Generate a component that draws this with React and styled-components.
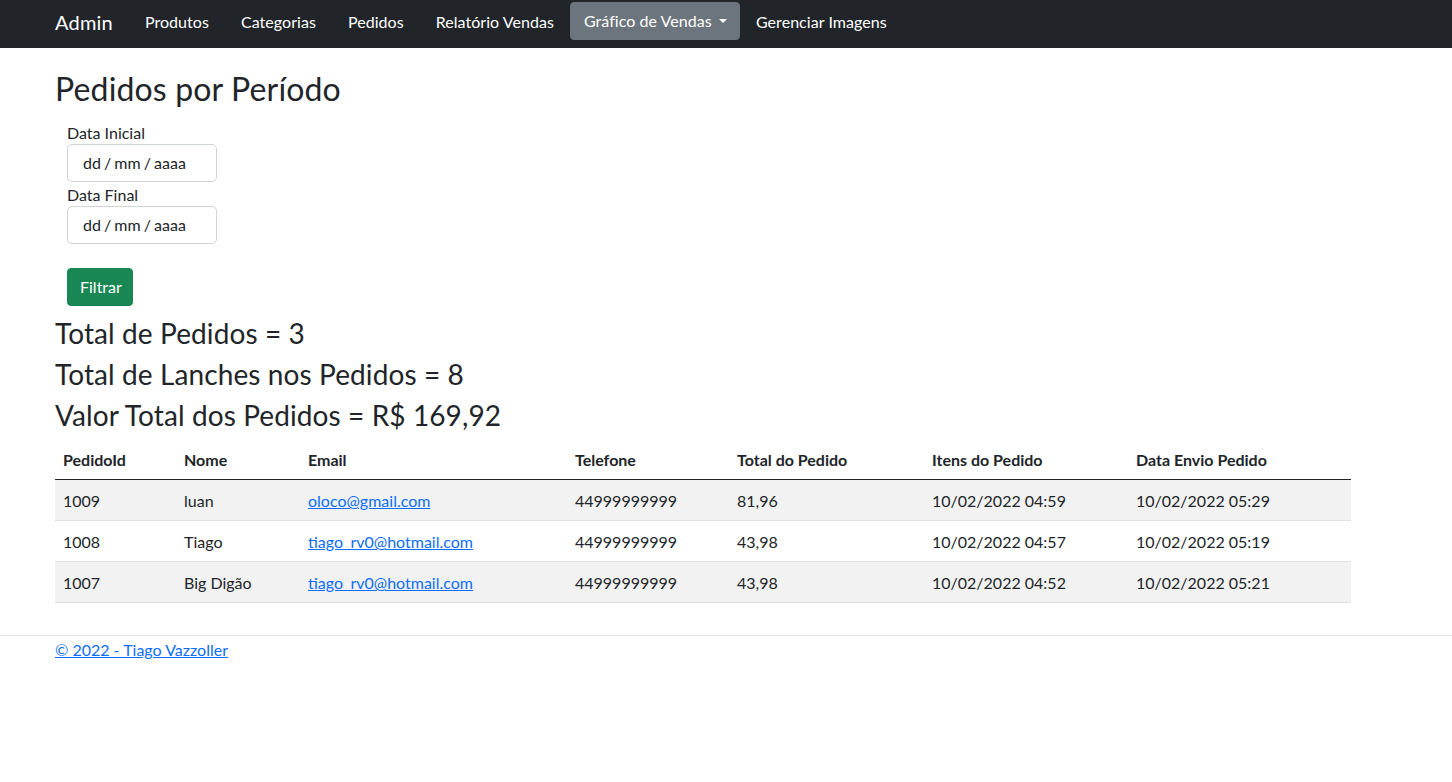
import React from "react";
import styled, { createGlobalStyle } from "styled-components";

const GlobalStyle = createGlobalStyle`
  body {
    margin: 0;
    font-family: "Segoe UI", Lato, "Liberation Sans", sans-serif;
    font-size: 16px;
    line-height: 1.5;
    color: #212529;
    background: #ffffff;
  }
  * {
    box-sizing: border-box;
  }
`;

const NavBar = styled.nav`
  background-color: #212529;
  height: 48px;
`;

const NavInner = styled.div`
  width: 1296px;
  margin-left: 55px;
  height: 100%;
  display: flex;
  align-items: flex-start;
  padding-top: 2px;
  letter-spacing: 0.05px;
`;

const Brand = styled.a`
  color: #ffffff;
  font-size: 20px;
  line-height: 40px;
  margin-right: 16px;
  text-decoration: none;
  letter-spacing: 0.2px;
`;

const NavLink = styled.a`
  color: #ffffff;
  padding: 8px 16px;
  line-height: 24px;
  text-decoration: none;
  white-space: nowrap;
`;

const DropButton = styled.button`
  font-family: inherit;
  font-size: 16px;
  line-height: 24px;
  letter-spacing: 0.05px;
  color: #ffffff;
  background-color: #6c757d;
  border: 1px solid #6c757d;
  border-radius: 4px;
  padding: 6px 12px 6px 13px;
  white-space: nowrap;

  &::after {
    content: "";
    display: inline-block;
    margin-left: 0.45em;
    vertical-align: 0.255em;
    border-top: 0.3em solid;
    border-right: 0.3em solid transparent;
    border-left: 0.3em solid transparent;
    border-bottom: 0;
  }
`;

const Main = styled.main`
  width: 1296px;
  margin-left: 55px;
  padding-top: 22px;
  padding-bottom: 32px;
`;

const Title = styled.h2`
  font-size: 32px;
  font-weight: 400;
  line-height: 38px;
  letter-spacing: 0.15px;
  margin: 0 0 12px;
`;

const Form = styled.form`
  padding-left: 12px;
  display: flex;
  flex-direction: column;
  align-items: flex-start;
`;

const Label = styled.label`
  display: block;
  line-height: 24px;
  padding-top: 1px;
  margin-bottom: -1px;
`;

const DateBox = styled.div`
  width: 150px;
  height: 38px;
  border: 1px solid #ced4da;
  border-radius: 5px;
  padding: 0 15px;
  display: flex;
  align-items: center;
  font-size: 16px;
  word-spacing: -1px;
  color: #212529;
`;

const FilterButton = styled.button`
  margin-top: 24px;
  font-family: inherit;
  font-size: 16px;
  line-height: 24px;
  color: #ffffff;
  background-color: #198754;
  border: 1px solid #198754;
  border-radius: 4px;
  padding: 6px 12px;
  width: 66px;
`;

const Total = styled.h3`
  font-size: 28px;
  font-weight: 400;
  line-height: 34px;
  letter-spacing: 0.1px;
  margin: 0 0 7px;

  &:first-of-type {
    margin-top: 10px;
  }
`;

const Table = styled.table`
  width: 1296px;
  border-collapse: collapse;
  table-layout: fixed;
  margin-top: 8px;
`;

const Th = styled.th`
  text-align: left;
  font-weight: 700;
  padding: 8px;
  line-height: 23px;
  border-bottom: 1px solid #212529;
  width: ${props => props.w}px;
`;

const Row = styled.tr`
  background-color: ${props => (props.striped ? "#f2f2f2" : "#ffffff")};
`;

const Td = styled.td`
  padding: 9px 8px 7px;
  line-height: 24px;
  border-bottom: 1px solid #dee2e6;
  white-space: nowrap;
`;

const MailLink = styled.a`
  color: #0d6efd;
  text-decoration: underline;
`;

const Footer = styled.footer`
  border-top: 1px solid #dee2e6;
  padding-top: 2px;
`;

const FooterInner = styled.div`
  margin-left: 55px;
`;

const FooterLink = styled.a`
  color: #0d6efd;
  text-decoration: underline;
`;

const columns = [
  { title: "PedidoId", w: 121 },
  { title: "Nome", w: 124 },
  { title: "Email", w: 267 },
  { title: "Telefone", w: 162 },
  { title: "Total do Pedido", w: 195 },
  { title: "Itens do Pedido", w: 204 },
  { title: "Data Envio Pedido", w: 223 }
];

const pedidos = [
  ["1009", "luan", "oloco@gmail.com", "44999999999", "81,96", "10/02/2022 04:59", "10/02/2022 05:29"],
  ["1008", "Tiago", "tiago_rv0@hotmail.com", "44999999999", "43,98", "10/02/2022 04:57", "10/02/2022 05:19"],
  ["1007", "Big Digão", "tiago_rv0@hotmail.com", "44999999999", "43,98", "10/02/2022 04:52", "10/02/2022 05:21"]
];

const navItems = ["Produtos", "Categorias", "Pedidos", "Relatório Vendas"];

export default function App() {
  return (
    <>
      <GlobalStyle />
      <NavBar>
        <NavInner>
          <Brand href="#">Admin</Brand>
          {navItems.map(item => (
            <NavLink key={item} href="#">
              {item}
            </NavLink>
          ))}
          <DropButton type="button">Gráfico de Vendas</DropButton>
          <NavLink href="#">Gerenciar Imagens</NavLink>
        </NavInner>
      </NavBar>

      <Main>
        <Title>Pedidos por Período</Title>
        <Form onSubmit={e => e.preventDefault()}>
          <Label>Data Inicial</Label>
          <DateBox>dd / mm / aaaa</DateBox>
          <Label>Data Final</Label>
          <DateBox>dd / mm / aaaa</DateBox>
          <FilterButton type="submit">Filtrar</FilterButton>
        </Form>

        <Total>Total de Pedidos = 3</Total>
        <Total>Total de Lanches nos Pedidos = 8</Total>
        <Total>Valor Total dos Pedidos = R$ 169,92</Total>

        <Table>
          <thead>
            <tr>
              {columns.map(c => (
                <Th key={c.title} w={c.w}>
                  {c.title}
                </Th>
              ))}
            </tr>
          </thead>
          <tbody>
            {pedidos.map((p, i) => (
              <Row key={p[0]} striped={i % 2 === 0}>
                <Td>{p[0]}</Td>
                <Td>{p[1]}</Td>
                <Td>
                  <MailLink href="#">{p[2]}</MailLink>
                </Td>
                <Td>{p[3]}</Td>
                <Td>{p[4]}</Td>
                <Td>{p[5]}</Td>
                <Td>{p[6]}</Td>
              </Row>
            ))}
          </tbody>
        </Table>
      </Main>

      <Footer>
        <FooterInner>
          <FooterLink href="#">© 2022 - Tiago Vazzoller</FooterLink>
        </FooterInner>
      </Footer>
    </>
  );
}
